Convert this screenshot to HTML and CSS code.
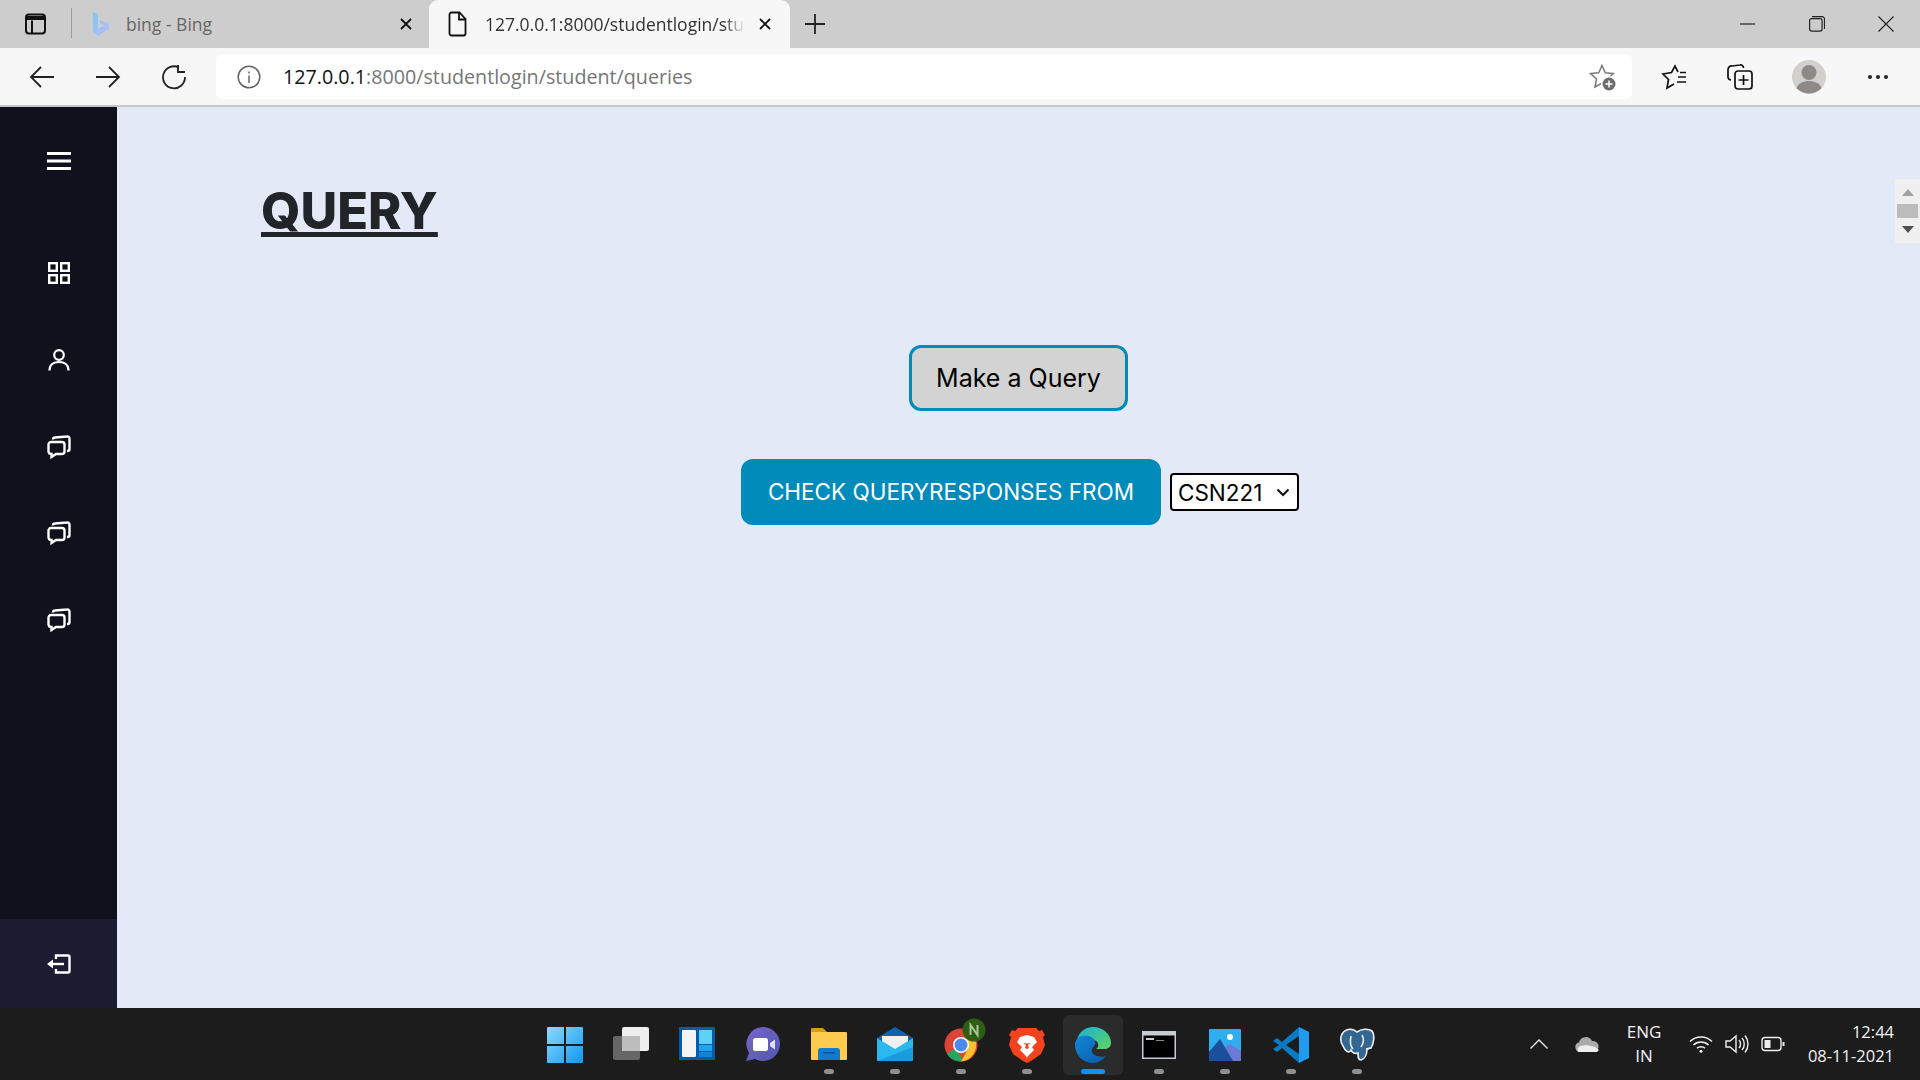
FILE: index.html
```html
<!DOCTYPE html>
<html>
<head>
<title>Query</title>
<link rel="stylesheet" href="styles.css">
</head>
<body>
	<div class="tabstrip">
		<div class="tab-toggle">
			<svg width="24" height="24" viewBox="0 0 24 24" fill="none" stroke="#111" stroke-width="2"><rect x="3" y="2.500" width="19" height="19" rx="3"/><path d="M9 8.500V21"/><path d="M3 6h19" stroke-width="4"/></svg>
		</div>
		<div class="tab-divider"></div>
		<div class="tab tab-idle">
			<svg class="favicon" width="18" height="26" viewBox="0 0 18 26"><defs><linearGradient id="bing" x1="0" y1="0" x2="1" y2="1"><stop offset="0" stop-color="#7cc8f2"/><stop offset="1" stop-color="#bdbcf0"/></linearGradient></defs><path d="M1 1l5 2v15l6-3.500-3-1.500-1.500-4L17 12.500v5L6.500 25 1 21z" fill="url(#bing)"/></svg>
			<span class="tab-title">bing - Bing</span>
			<svg class="tab-close" width="14" height="14" viewBox="0 0 14 14" stroke="#111" stroke-width="1.800"><path d="M2 2l10 10M12 2L2 12"/></svg>
		</div>
		<div class="tab tab-active">
			<svg class="favicon" width="20" height="26" viewBox="0 0 20 26" fill="none" stroke="#111" stroke-width="1.800"><path d="M3.500 1.500h8l6 6.500v14.500a2 2 0 0 1-2 2h-12a2 2 0 0 1-2-2v-19a2 2 0 0 1 2-2z"/><path d="M11 1.500V8.500h6.500"/></svg>
			<span class="tab-title">127.0.0.1:8000/studentlogin/stud</span>
			<svg class="tab-close" width="14" height="14" viewBox="0 0 14 14" stroke="#111" stroke-width="1.800"><path d="M2 2l10 10M12 2L2 12"/></svg>
		</div>
		<div class="new-tab">
			<svg width="22" height="22" viewBox="0 0 22 22" stroke="#222" stroke-width="1.800"><path d="M11 1v20M1 11h20"/></svg>
		</div>
		<div class="win-controls">
			<div class="win-btn"><svg width="16" height="16" viewBox="0 0 16 16" stroke="#222" stroke-width="1.200"><path d="M0 8h15"/></svg></div>
			<div class="win-btn"><svg width="16" height="16" viewBox="0 0 16 16" fill="none" stroke="#222" stroke-width="1.200"><rect x="0.600" y="2.600" width="12.500" height="12.500" rx="2"/><path d="M3 0.600h10a2.500 2.500 0 0 1 2.500 2.500V13"/></svg></div>
			<div class="win-btn"><svg width="16" height="16" viewBox="0 0 16 16" stroke="#222" stroke-width="1.200"><path d="M0.500 0.500l15 15M15.500 0.500l-15 15"/></svg></div>
		</div>
	</div>

	<div class="toolbar">
		<div class="tool-btn"><svg width="26" height="26" viewBox="0 0 26 26" fill="none" stroke="#222" stroke-width="1.800"><path d="M25 13H2M12 3L2 13l10 10"/></svg></div>
		<div class="tool-btn"><svg width="26" height="26" viewBox="0 0 26 26" fill="none" stroke="#222" stroke-width="1.800"><path d="M1 13h23M14 3l10 10-10 10"/></svg></div>
		<div class="tool-btn"><svg width="26" height="26" viewBox="0 0 26 26" fill="none" stroke="#222" stroke-width="1.800"><path d="M18 3.500A11 11 0 1 0 24 13"/><path d="M17 1v7h7"/></svg></div>
		<div class="address">
			<svg class="info" width="24" height="24" viewBox="0 0 24 24" fill="none" stroke="#666" stroke-width="1.500"><circle cx="12" cy="12" r="10.800"/><path d="M12 10.500v7.500"/><path d="M12 6.500v2"/></svg>
			<span class="url"><b>127.0.0.1</b>:8000/studentlogin/student/queries</span>
			<svg class="star-add" width="28" height="28" viewBox="0 0 28 28" fill="none" stroke="#777" stroke-width="1.500"><path d="M14 2.500l3.300 7.200 8 .9-6 5.400 1.500 8-6.800-4-7 4 1.500-8-6-5.400 8.200-.9z"/><circle cx="21" cy="21" r="8" fill="#fff" stroke="none"/><circle cx="21" cy="21" r="6.500" fill="#6e6e6e" stroke="none"/><path d="M21 17.500v7M17.500 21h7" stroke="#fff" stroke-width="1.500"/></svg>
		</div>
		<div class="tool-btn tool-fav"><svg width="26" height="26" viewBox="0 0 26 26" fill="none" stroke="#111" stroke-width="1.700"><path d="M17 8L14 2l-3.500 6.500L2 10l5.500 5.500L6 24l7-4"/><path d="M19 8.500h6M17 13h8M16 18h9"/></svg></div>
		<div class="tool-btn"><svg width="26" height="26" viewBox="0 0 26 26" fill="none" stroke="#111" stroke-width="1.700"><path d="M4 16a3 3 0 0 1-3-3V5.500a3.500 3.500 0 0 1 4-3.500l8-1a3 3 0 0 1 3.500 3"/><rect x="8" y="7" width="17" height="18" rx="3"/><path d="M16.500 11v10M11.500 16h10"/></svg></div>
		<div class="tool-btn tool-avatar">
			<svg width="34" height="34" viewBox="0 0 34 34"><circle cx="17" cy="17" r="17" fill="#d2d0cb"/><circle cx="17" cy="12.500" r="7.500" fill="#8d8986"/><path d="M4.500 28c2-5 7-7 12.500-7s10.500 2 12.500 7a17 17 0 0 1-25 0z" fill="#8d8986"/></svg>
		</div>
		<div class="tool-btn"><svg width="22" height="6" viewBox="0 0 22 6" fill="#222"><circle cx="3" cy="3" r="2"/><circle cx="11" cy="3" r="2"/><circle cx="19" cy="3" r="2"/></svg></div>
	</div>

	<div class="app">
		<div class="sidebar">
			<div class="side-menu">
				<svg width="30" height="30" viewBox="0 0 30 30" stroke="#fff" stroke-width="2.800"><path d="M3 7.500h24M3 15h24M3 22.500h24"/></svg>
			</div>
			<div class="side-nav">
				<div class="side-item"><svg width="30" height="30" viewBox="0 0 30 30" fill="none" stroke="#fff" stroke-width="2.400"><rect x="5.200" y="5.200" width="7.600" height="7.600"/><rect x="17.200" y="5.200" width="7.600" height="7.600"/><rect x="5.200" y="17.200" width="7.600" height="7.600"/><rect x="17.200" y="17.200" width="7.600" height="7.600"/></svg></div>
				<div class="side-item"><svg width="30" height="30" viewBox="0 0 30 30" fill="none" stroke="#fff" stroke-width="2.200"><circle cx="15" cy="10" r="4.800"/><path d="M5.500 25.500c0-5.500 4-8.500 9.500-8.500s9.500 3 9.500 8.500"/></svg></div>
				<div class="side-item"><svg width="30" height="30" viewBox="0 0 30 30" fill="none" stroke="#fff" stroke-width="2.400"><path d="M4.500 12.500a2.500 2.500 0 0 1 2.500-2.500h11a2.500 2.500 0 0 1 2.500 2.500v7a2.500 2.500 0 0 1-2.500 2.500h-6l-4.500 3v-3a3 3 0 0 1-3-2.500z"/><path d="M9 7.500a2 2 0 0 1 2-2l12-1a2 2 0 0 1 2.500 2v10.500a2 2 0 0 1-2 2h-.5"/></svg></div>
				<div class="side-item"><svg width="30" height="30" viewBox="0 0 30 30" fill="none" stroke="#fff" stroke-width="2.400"><path d="M4.500 12.500a2.500 2.500 0 0 1 2.500-2.500h11a2.500 2.500 0 0 1 2.500 2.500v7a2.500 2.500 0 0 1-2.500 2.500h-6l-4.500 3v-3a3 3 0 0 1-3-2.500z"/><path d="M9 7.500a2 2 0 0 1 2-2l12-1a2 2 0 0 1 2.500 2v10.500a2 2 0 0 1-2 2h-.5"/></svg></div>
				<div class="side-item"><svg width="30" height="30" viewBox="0 0 30 30" fill="none" stroke="#fff" stroke-width="2.400"><path d="M4.500 12.500a2.500 2.500 0 0 1 2.500-2.500h11a2.500 2.500 0 0 1 2.500 2.500v7a2.500 2.500 0 0 1-2.500 2.500h-6l-4.500 3v-3a3 3 0 0 1-3-2.500z"/><path d="M9 7.500a2 2 0 0 1 2-2l12-1a2 2 0 0 1 2.500 2v10.500a2 2 0 0 1-2 2h-.5"/></svg></div>
			</div>
			<div class="side-foot">
				<svg width="30" height="30" viewBox="0 0 30 30" fill="none" stroke="#fff" stroke-width="2.400"><path d="M12 10V6.500h12a1.500 1.500 0 0 1 1.500 1.500v14a1.500 1.500 0 0 1-1.500 1.500H12V20"/><path d="M20 15H8"/><path d="M9 10.500v9l-6-4.500z" fill="#fff" stroke="none"/></svg>
			</div>
		</div>

		<div class="main">
			<h1 class="page-title">QUERY</h1>
			<div class="actions">
				<button class="btn-make">Make a Query</button>
				<div class="check-row">
					<button class="btn-check">CHECK QUERYRESPONSES FROM</button>
					<select class="course-select">
						<option>CSN221</option>
					</select>
				</div>
			</div>
			<div class="mini-scroll">
				<svg width="12" height="7" viewBox="0 0 12 7" fill="#a3a3a3"><path d="M6 0l6 7H0z"/></svg>
				<div class="mini-thumb"></div>
				<svg width="12" height="7" viewBox="0 0 12 7" fill="#505050"><path d="M0 0h12L6 7z"/></svg>
			</div>
		</div>
	</div>

	<div class="taskbar">
		<div></div>
		<div class="task-icons">
			<div class="task-tile">
				<svg width="36" height="36" viewBox="0 0 36 36"><defs><linearGradient id="win" x1="0" y1="0" x2="1" y2="1"><stop offset="0" stop-color="#8bdcff"/><stop offset="1" stop-color="#0f96f2"/></linearGradient></defs><path fill="url(#win)" d="M1 0h16v17H0V1a1 1 0 0 1 1-1zM19 0h16a1 1 0 0 1 1 1v16H19zM0 19h17v17H1a1 1 0 0 1-1-1zM19 19h17v16a1 1 0 0 1-1 1H19z"/></svg>
			</div>
			<div class="task-tile">
				<svg width="36" height="36" viewBox="0 0 36 36"><rect x="0" y="9" width="27" height="24" rx="2" fill="#666"/><rect x="9" y="0" width="27" height="24" rx="2" fill="#eee"/><rect x="9" y="9" width="18" height="15" fill="#bdbdbd"/></svg>
			</div>
			<div class="task-tile">
				<svg width="36" height="36" viewBox="0 0 36 36"><rect width="36" height="33" rx="1" fill="#0b5aa5"/><rect x="3" y="3" width="14" height="27" rx="1" fill="#f4f4f4"/><rect x="20" y="3" width="13" height="14" fill="#5fd0f7"/><rect x="20" y="18" width="13" height="6" fill="#1ba6f0"/><rect x="20" y="25" width="13" height="5" fill="#0e86d4"/></svg>
			</div>
			<div class="task-tile">
				<svg width="36" height="36" viewBox="0 0 36 36"><defs><linearGradient id="teams" x1="0" y1="0" x2="1" y2="1"><stop offset="0" stop-color="#7a66c4"/><stop offset="1" stop-color="#4f56b5"/></linearGradient></defs><path fill="url(#teams)" d="M18 0a17 17 0 1 1-8 32L1 34l3-8A17 17 0 0 1 18 0z"/><rect x="8" y="11" width="15" height="13" rx="2.500" fill="#fff"/><path d="M25 16l5-3.500v10L25 19z" fill="#dfe3f7"/></svg>
			</div>
			<div class="task-tile">
				<svg width="36" height="36" viewBox="0 0 36 36"><path d="M0 2a1 1 0 0 1 1-1h11l4 4v3H0z" fill="#d99d10"/><rect y="5" width="36" height="28" rx="1" fill="#fdcb4e"/><path d="M7 33v-9a3 3 0 0 1 3-3h16a3 3 0 0 1 3 3v9z" fill="#0f7cd0"/><rect x="12" y="25" width="12" height="1.500" fill="#074f94"/></svg>
				<span class="task-dot"></span>
			</div>
			<div class="task-tile">
				<svg width="36" height="36" viewBox="0 0 36 36"><path d="M18 0l18 11-18 12L0 11z" fill="#0a64b0"/><path d="M5 9h26v8l-13 8-13-8z" fill="#f0f0f0"/><path d="M0 11l18 11 18-11v22a1 1 0 0 1-1 1H1a1 1 0 0 1-1-1z" fill="#2bb8ef"/><path d="M0 34l36-14v13a1 1 0 0 1-1 1z" fill="#1690dc" opacity=".7"/></svg>
				<span class="task-dot"></span>
			</div>
			<div class="task-tile">
				<svg width="36" height="36" viewBox="0 0 36 36"><circle cx="18" cy="18" r="16.500" fill="#db4437"/><path d="M4 27a16.500 16.500 0 0 0 14 7.500l2-1L13 21z" fill="#24a561"/><path d="M18 12h14a16.500 16.500 0 0 1-14 22.500L25 22z" fill="#fbc02d"/><circle cx="18" cy="18" r="8" fill="#fff"/><circle cx="18" cy="18" r="6.500" fill="#4a8af0"/><circle cx="31" cy="3" r="11.500" fill="#2e5e14"/><path d="M27.500 8V-2l7 10V-2" fill="none" stroke="#a9c69a" stroke-width="2"/></svg>
				<span class="task-dot"></span>
			</div>
			<div class="task-tile">
				<svg width="36" height="36" viewBox="0 0 36 36"><path d="M9 1h18l3 3 3-1 3 5-2 2 2 8-4 9-10 7-4 2-4-2-10-7-4-9 2-8-2-2 3-5 3 1z" fill="#f2421e"/><path d="M11 10l7-2 7 2 3 5-5 5 2 3-6 6-1 2-1-2-6-6 2-3-5-5z" fill="#fff"/><path d="M14 16l3 2-1 3 2 1 2-1-1-3 3-2-4 .5z" fill="#f2421e"/></svg>
				<span class="task-dot"></span>
			</div>
			<div class="task-tile task-tile-on">
				<svg width="36" height="36" viewBox="0 0 36 36"><defs><linearGradient id="edgeTop" x1="0" y1="0" x2="1" y2="1"><stop offset="0" stop-color="#19b1d6"/><stop offset="1" stop-color="#5ed65e"/></linearGradient><linearGradient id="edgeLow" x1="0" y1="0" x2="1" y2="1"><stop offset="0" stop-color="#1288d8"/><stop offset="1" stop-color="#0a5aa8"/></linearGradient></defs><path d="M2 13C4 5 10 0 18 0c10 0 18 7 18 16 0 4-3 6-7 6h-8c3-2 3-6 0-8-6-4-14-4-19-1z" fill="url(#edgeTop)"/><path d="M0 18C0 10 8 7 14 9c6 2 8 7 5 10-3 3-3 7 1 9 3 2 8 2 11 1-3 4-8 7-13 7C8 36 0 28 0 18z" fill="url(#edgeLow)"/></svg>
				<span class="task-bar"></span>
			</div>
			<div class="task-tile">
				<svg width="34" height="28" viewBox="0 0 34 28"><rect width="34" height="28" fill="#c7ccd4"/><rect x="1.500" y="4.500" width="31" height="22" fill="#000"/><rect x="4" y="7" width="8" height="2" fill="#ccc"/><rect x="14" y="9" width="8" height="1" fill="#888"/></svg>
				<span class="task-dot"></span>
			</div>
			<div class="task-tile">
				<svg width="32" height="32" viewBox="0 0 32 32"><rect width="32" height="32" rx="1" fill="#2eaef0"/><circle cx="21" cy="8" r="3" fill="#fff"/><path d="M14 20l7-5 11 7v10H20z" fill="#6c79d6"/><path d="M0 23L11 10l13 22H1a1 1 0 0 1-1-1z" fill="#1a4f9a"/></svg>
				<span class="task-dot"></span>
			</div>
			<div class="task-tile">
				<svg width="36" height="36" viewBox="0 0 36 36"><path d="M26 0l10 5v26l-10 5z" fill="#1f9cf0"/><path d="M26 0v9L13 18l13 9v9L9 21l-5 4-4-3 6-4-6-4 4-3 5 4z" fill="#0a7ac4"/></svg>
				<span class="task-dot"></span>
			</div>
			<div class="task-tile">
				<svg width="36" height="36" viewBox="0 0 36 36" stroke="#eee" stroke-width="1.600"><path d="M3 7c4-6 11-6 15-2 4-3 11-4 15-1 3 4 2 12-1 17l-4 1c0 5-2 10-6 11-3 0-3-3-3-7-3 1-6 0-7-3-2 4-6 1-8-4C2 16 1 11 3 7z" fill="#336791"/><path d="M12 9c-1 5-1 10 2 13M23 8c2 3 2 8-1 12M27 22l5-1" fill="none"/></svg>
				<span class="task-dot"></span>
			</div>
		</div>
		<div class="tray">
			<svg class="tray-chevron" width="18" height="10" viewBox="0 0 18 10" fill="none" stroke="#eee" stroke-width="1.300"><path d="M0.500 9.500L9 1l8.500 8.500"/></svg>
			<svg class="tray-cloud" width="24" height="16" viewBox="0 0 24 16"><path d="M5 16a5 5 0 0 1-1-9.800A7 7 0 0 1 17 5a5.500 5.500 0 0 1 2 11z" fill="#aaa"/><path d="M3 16a5 5 0 0 1 2-6l7-1 8 2 4 3-2 2z" fill="#eee"/></svg>
			<div class="tray-lang">ENG<br>IN</div>
			<svg class="tray-wifi" width="24" height="18" viewBox="0 0 24 18" fill="none" stroke="#eee" stroke-width="1.600"><path d="M1 6.500c6-6 16-6 22 0M4.500 10c4-4 11-4 15 0M8 13.300c2-2 6-2 8 0"/><circle cx="12" cy="16.300" r="1.500" fill="#eee" stroke="none"/></svg>
			<svg class="tray-vol" width="24" height="20" viewBox="0 0 24 20" fill="none" stroke="#eee" stroke-width="1.400"><path d="M1 7h4l6-5v16l-6-5H1z"/><path d="M14 6c2 2 2 6 0 8M17 4c3 3 3 9 0 12M20 1.500c4 5 4 12 0 17"/></svg>
			<svg class="tray-bat" width="24" height="16" viewBox="0 0 24 16" fill="none" stroke="#eee" stroke-width="1.400"><rect x="1" y="1.500" width="19" height="13" rx="3"/><rect x="3.500" y="4" width="6" height="8" fill="#eee" stroke="none"/><path d="M22.500 6v4" stroke-width="2"/></svg>
			<div class="tray-clock">12:44<br>08-11-2021</div>
		</div>
	</div>
</body>
</html>
```

FILE: styles.css
```css
* {
	box-sizing: border-box;
}
body {
	margin: 0;
	width: 1920px;
	height: 1080px;
	overflow: hidden;
	display: flex;
	flex-direction: column;
	font-family: "Open Sans", sans-serif;
	background-color: #e3e9f7;
}
svg {
	display: block;
	flex-shrink: 0;
}

/* browser tabs */
.tabstrip {
	height: 48px;
	background-color: #cdcdcd;
	display: flex;
	align-items: flex-start;
	flex-shrink: 0;
}
.tab-toggle {
	width: 71px;
	height: 47px;
	padding-left: 23px;
	display: flex;
	align-items: center;
}
.tab-divider {
	width: 1px;
	height: 30px;
	margin-top: 8px;
	background-color: #9a9a9a;
}
.tab {
	height: 47px;
	display: flex;
	align-items: center;
	font-size: 17.500px;
}
.tab-idle {
	width: 357px;
	padding: 0 16px 0 20px;
	color: #666;
}
.tab-active {
	width: 361px;
	height: 48px;
	padding: 0 18px 1px 19px;
	background-color: #f7f7f7;
	border-radius: 9px 9px 0 0;
	color: #333;
}
.tab-title {
	flex: 1;
	margin-left: 16px;
	white-space: nowrap;
}
.tab-active .tab-title {
	flex: none;
	width: 260px;
	margin-left: 17px;
	margin-right: auto;
	-webkit-mask-image: linear-gradient(to right, #000 92%, transparent 100%);
	mask-image: linear-gradient(to right, #000 92%, transparent 100%);
}
.new-tab {
	width: 50px;
	height: 47px;
	display: flex;
	align-items: center;
	justify-content: center;
}
.win-controls {
	margin-left: auto;
	height: 47px;
	display: flex;
	align-items: center;
}
.win-btn {
	width: 69px;
	height: 47px;
	display: flex;
	align-items: center;
	justify-content: center;
}

/* address bar row */
.toolbar {
	height: 59px;
	background-color: #f7f7f7;
	border-bottom: 2px solid #c6c6c6;
	display: flex;
	align-items: center;
	padding: 0 9px;
	flex-shrink: 0;
}
.tool-btn {
	width: 66px;
	height: 45px;
	display: flex;
	align-items: center;
	justify-content: center;
}
.tool-fav {
	margin-left: 9px;
}
.tool-avatar {
	margin: 0 3px;
}
.address {
	width: 1416px;
	height: 45px;
	margin-left: 9px;
	background-color: #fff;
	border-radius: 7px;
	display: flex;
	align-items: center;
	padding: 0 16px 0 21px;
}
.url {
	margin-left: 22px;
	font-size: 19.700px;
	color: #767676;
}
.url b {
	font-weight: 400;
	color: #111;
}
.star-add {
	margin-left: auto;
}

/* page */
.app {
	flex: 1;
	display: flex;
	min-height: 0;
}
.sidebar {
	width: 117px;
	background-color: #11101d;
	display: flex;
	flex-direction: column;
}
.side-menu {
	height: 107px;
	display: flex;
	align-items: center;
	justify-content: center;
	flex-shrink: 0;
}
.side-nav {
	margin-top: 16px;
}
.side-item {
	height: 86.700px;
	display: flex;
	align-items: center;
	justify-content: center;
}
.side-foot {
	margin-top: auto;
	height: 89px;
	background-color: #1d1b31;
	display: flex;
	align-items: center;
	justify-content: center;
}
.main {
	flex: 1;
	position: relative;
	background-color: #e3e9f7;
}
.page-title {
	margin: 78px 0 0 144px;
	font-family: Inter, sans-serif;
	font-size: 50.500px;
	font-weight: 800;
	line-height: 52px;
	color: #212529;
	text-decoration: underline;
	text-decoration-thickness: 5px;
	text-underline-offset: 3px;
}
.actions {
	margin-top: 108px;
	display: flex;
	flex-direction: column;
	align-items: center;
	gap: 48px;
	font-family: Inter, sans-serif;
}
.btn-make {
	width: 219px;
	height: 66px;
	font-family: inherit;
	font-size: 25px;
	color: #000;
	background-color: #d3d3d3;
	border: 3px solid #008bbb;
	border-radius: 12px;
}
.check-row {
	display: flex;
	align-items: center;
	gap: 9px;
	margin-left: 3px;
}
.btn-check {
	width: 420px;
	height: 66px;
	padding: 0 0 2px 0;
	font-family: inherit;
	font-size: 22.500px;
	color: #fff;
	background-color: #008bbb;
	border: none;
	border-radius: 12px;
}
.course-select {
	width: 129px;
	height: 38px;
	padding-left: 6px;
	font-family: inherit;
	font-size: 22.500px;
	color: #000;
	border: 2px solid #000;
	border-radius: 4px;
	appearance: none;
	background: #fff url("data:image/svg+xml,%3Csvg xmlns='http://www.w3.org/2000/svg' width='14' height='9' viewBox='0 0 14 9'%3E%3Cpath d='M1.500 1.500L7 7l5.500-5.500' fill='none' stroke='%23111' stroke-width='2'/%3E%3C/svg%3E") no-repeat right 7px center;
}
.mini-scroll {
	position: absolute;
	top: 72px;
	right: 0;
	width: 25px;
	height: 64px;
	background-color: #f0f0f0;
	display: flex;
	flex-direction: column;
	align-items: center;
	justify-content: space-between;
	padding: 10px 0;
}
.mini-thumb {
	width: 21px;
	height: 14px;
	background-color: #bcbcbc;
}

/* windows taskbar */
.taskbar {
	height: 72px;
	background-color: #1c1c1c;
	color: #f2f2f2;
	display: grid;
	grid-template-columns: 1fr auto 1fr;
	flex-shrink: 0;
}
.task-icons {
	display: flex;
	gap: 6px;
	padding-top: 7px;
	margin-left: 2px;
}
.task-tile {
	position: relative;
	width: 60px;
	height: 60px;
	display: flex;
	align-items: center;
	justify-content: center;
	border-radius: 6px;
}
.task-tile svg {
	overflow: visible;
}
.task-tile-on {
	background-color: #2b2b2b;
}
.task-dot {
	position: absolute;
	left: 25px;
	bottom: 1px;
	width: 10px;
	height: 5px;
	border-radius: 3px;
	background-color: #8f8f8f;
}
.task-bar {
	position: absolute;
	left: 18px;
	bottom: 1px;
	width: 24px;
	height: 5px;
	border-radius: 3px;
	background-color: #0a93f5;
}
.tray {
	display: flex;
	align-items: center;
	padding-left: 143px;
	font-size: 17px;
	line-height: 24px;
}
.tray-cloud {
	margin-left: 27px;
}
.tray-lang {
	width: 50px;
	margin-left: 20px;
	text-align: center;
}
.tray-wifi {
	margin-left: 20px;
}
.tray-vol {
	margin-left: 12px;
}
.tray-bat {
	margin-left: 12px;
}
.tray-clock {
	width: 109px;
	text-align: right;
	font-size: 16.500px;
}
```
